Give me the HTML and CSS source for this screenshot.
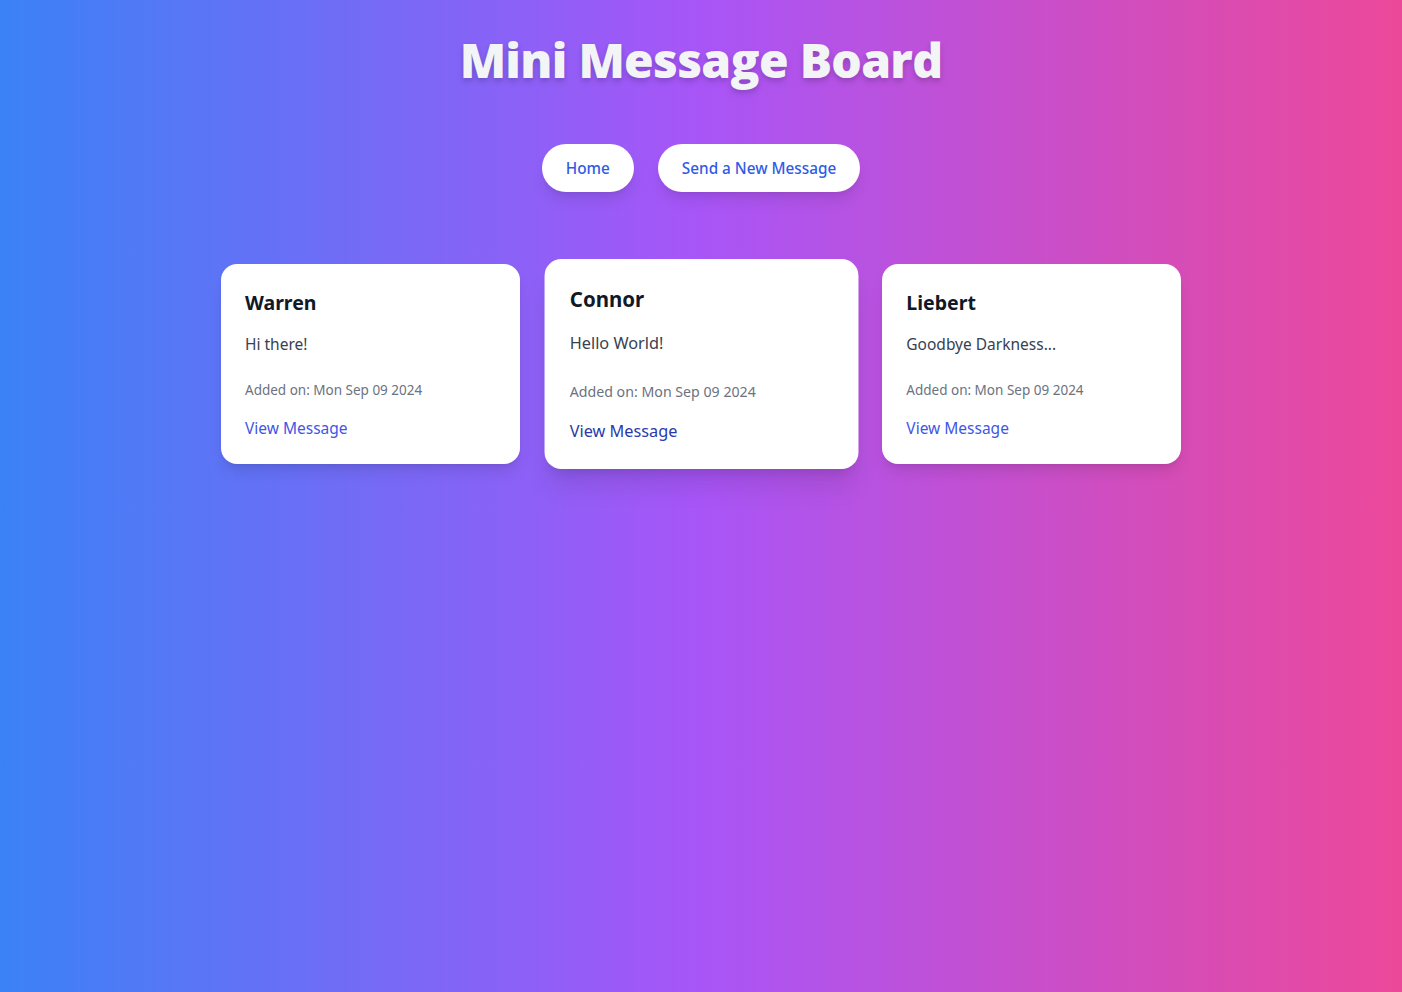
FILE: index.html
```html
<!DOCTYPE html>
<html lang="en">
<head>
<meta charset="utf-8">
<title>Mini Message Board</title>
<link rel="stylesheet" href="styles.css">
</head>
<body>
  <div class="page">
    <h1 class="title">Mini Message Board</h1>
    <nav class="nav">
      <a class="nav-btn" href="#">Home</a>
      <a class="nav-btn" href="#">Send a New Message</a>
    </nav>
    <main class="cards">
      <article class="card">
        <h2 class="card-name">Warren</h2>
        <p class="card-text">Hi there!</p>
        <p class="card-date">Added on: Mon Sep 09 2024</p>
        <a class="card-link" href="#">View Message</a>
      </article>
      <article class="card card-hover">
        <h2 class="card-name">Connor</h2>
        <p class="card-text">Hello World!</p>
        <p class="card-date">Added on: Mon Sep 09 2024</p>
        <a class="card-link card-link-hover" href="#">View Message</a>
      </article>
      <article class="card">
        <h2 class="card-name">Liebert</h2>
        <p class="card-text">Goodbye Darkness...</p>
        <p class="card-date">Added on: Mon Sep 09 2024</p>
        <a class="card-link" href="#">View Message</a>
      </article>
    </main>
  </div>
</body>
</html>
```

FILE: styles.css
```css
* { box-sizing: border-box; }
html, body { margin: 0; padding: 0; }
body {
  min-height: 100vh;
  background: linear-gradient(to right, #3b82f6, #a855f7, #ec4899);
  font-family: "Noto Sans", "Open Sans", "Liberation Sans", sans-serif;
  color: #111827;
}
.page {
  padding: 36px 16px 32px;
  display: flex;
  flex-direction: column;
  align-items: center;
}
.title {
  margin: 0;
  font-family: "Open Sans", "Noto Sans", sans-serif;
  font-weight: 800;
  font-size: 48px;
  line-height: 48px;
  color: #f3f4f6;
  text-shadow: 0 4px 6px rgba(0,0,0,0.12), 0 2px 4px rgba(0,0,0,0.08);
  letter-spacing: -0.7px;
}
.nav {
  margin-top: 60px;
  display: flex;
  gap: 24px;
}
.nav-btn {
  display: block;
  background: #fff;
  color: #2f5be6;
  text-decoration: none;
  font-size: 15.3px;
  font-weight: 500;
  line-height: 24px;
  padding: 12px 24px;
  border-radius: 9999px;
  box-shadow: 0 10px 15px -3px rgba(0,0,0,0.1), 0 4px 6px -4px rgba(0,0,0,0.1);
}
.cards {
  margin-top: 72px;
  width: 960px;
  display: grid;
  grid-template-columns: repeat(3, 1fr);
  gap: 32px;
  align-items: start;
}
.card {
  background: #fff;
  border-radius: 16px;
  padding: 24px;
  box-shadow: 0 10px 15px -3px rgba(0,0,0,0.1), 0 4px 6px -4px rgba(0,0,0,0.1);
}
.card-hover {
  transform: scale(1.05);
  box-shadow: 0 20px 25px -5px rgba(0,0,0,0.1), 0 8px 10px -6px rgba(0,0,0,0.1);
}
.card-name {
  margin: 1px 0 15px;
  font-size: 19.5px;
  line-height: 28px;
  font-weight: 700;
  color: #111827;
}
.card-text {
  margin: 0 0 24px;
  font-size: 15.5px;
  line-height: 24px;
  color: #374151;
}
.card-date {
  margin: 0 0 16px;
  font-size: 13.5px;
  line-height: 20px;
  color: #6b7280;
}
.card-link {
  display: block;
  font-size: 15.5px;
  line-height: 24px;
  color: #3f56e6;
  text-decoration: none;
}
.card-link-hover { color: #2a3aad; }
```
